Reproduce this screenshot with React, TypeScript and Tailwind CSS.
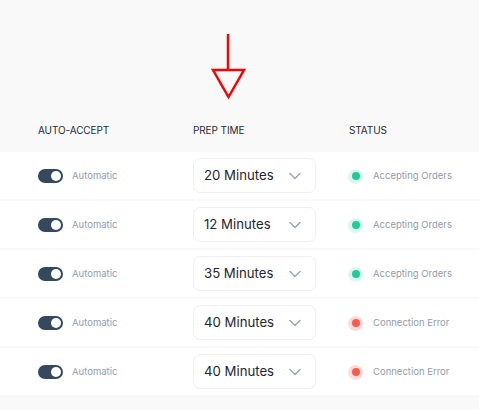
import React from "react";

const rows = [
  { time: "20 Minutes", ok: true },
  { time: "12 Minutes", ok: true },
  { time: "35 Minutes", ok: true },
  { time: "40 Minutes", ok: false },
  { time: "40 Minutes", ok: false },
];

function Toggle() {
  return (
    <div className="w-[25px] h-[14px] rounded-full bg-[#34495e] flex items-center justify-end pr-[2px]">
      <div className="w-[10px] h-[10px] rounded-full bg-white" />
    </div>
  );
}

export default function App() {
  return (
    <div
      className="w-[479px] h-[410px] bg-[#f9f9fa] flex flex-col"
      style={{ fontFamily: "Inter, 'Noto Sans', sans-serif" }}
    >
      <div className="h-[110px] flex justify-start pl-[211px] pt-[34px]">
        <svg width="36" height="66" viewBox="0 0 36 66">
          <line x1="17" y1="0" x2="17" y2="36" stroke="#ff0000" strokeWidth="2.5" />
          <polygon points="2,36 33,36 17.5,63" fill="none" stroke="#ff0000" strokeWidth="2.5" />
        </svg>
      </div>
      <div className="h-[42px] grid grid-cols-[155px_156px_1fr] pl-[38px] items-center pb-[1px]">
        <div className="text-[10px] text-[#1f2937] tracking-[-0.1px]">AUTO-ACCEPT</div>
        <div className="text-[10px] text-[#1f2937] tracking-[-0.1px]">PREP TIME</div>
        <div className="text-[10px] text-[#1f2937] tracking-[-0.1px]">STATUS</div>
      </div>
      <div className="flex flex-col gap-[2px]">
        {rows.map((r, i) => (
          <div
            key={i}
            className="h-[47px] bg-white grid grid-cols-[155px_156px_1fr] pl-[38px] items-center"
          >
            <div className="flex items-center gap-[9px]">
              <Toggle />
              <span className="text-[9.5px] text-[#929cab] mt-[2px]">Automatic</span>
            </div>
            <div>
              <div className="w-[123px] h-[35px] rounded-[7px] border border-[#eef0f3] flex items-center justify-between pl-[10px] pr-[14px]">
                <span className="text-[13.2px] text-[#1e2533] mt-[1px]">{r.time}</span>
                <svg width="12" height="8" viewBox="0 0 12 8">
                  <path d="M1 1.5 L6 6.5 L11 1.5" fill="none" stroke="#a3a8b0" strokeWidth="1.6" strokeLinecap="round" strokeLinejoin="round" />
                </svg>
              </div>
            </div>
            <div className="flex items-center gap-[10px] -ml-[1px] mt-[1px]">
              <div
                className={
                  "w-[15px] h-[15px] rounded-full flex items-center justify-center " +
                  (r.ok ? "bg-[#dcf7ee]" : "bg-[#fddcd9]")
                }
              >
                <div
                  className={
                    "w-[8px] h-[8px] rounded-full " +
                    (r.ok ? "bg-[#1ecb9a]" : "bg-[#fb5a4c]")
                  }
                />
              </div>
              <span className="text-[9.5px] text-[#929cab] mt-[1px]">
                {r.ok ? "Accepting Orders" : "Connection Error"}
              </span>
            </div>
          </div>
        ))}
      </div>
    </div>
  );
}
